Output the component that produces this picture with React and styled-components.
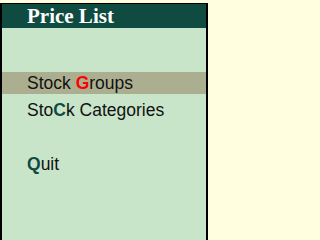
import React from 'react';
import styled, { createGlobalStyle } from 'styled-components';

const GlobalStyle = createGlobalStyle`
  html, body {
    margin: 0;
    padding: 0;
    height: 100%;
    background: #ffffe0;
    overflow: hidden;
  }
  #root {
    height: 100%;
  }
`;

const Panel = styled.div`
  box-sizing: border-box;
  margin-top: 3px;
  width: 208px;
  height: calc(100% - 3px);
  border-top: 1px solid #000;
  border-left: 2px solid #000;
  border-right: 2px solid #000;
  background: #c8e5ca;
  display: flex;
  flex-direction: column;
`;

const Header = styled.div`
  height: 24px;
  background: #0f4b40;
  color: #fff;
  font-family: "Liberation Serif", "Times New Roman", serif;
  font-weight: bold;
  font-size: 21px;
  line-height: 24px;
  padding-left: 25px;
  white-space: nowrap;
`;

const Menu = styled.div`
  display: flex;
  flex-direction: column;
  gap: 5px;
  padding-top: 44px;
`;

const Item = styled.div`
  height: 22px;
  line-height: 22px;
  padding-left: 25px;
  margin-top: ${(p) => (p.$spaced ? '27px' : '0')};
  background: ${(p) => (p.$active ? '#abaf90' : 'transparent')};
  color: #111;
  font-family: "Liberation Sans", Arial, sans-serif;
  font-size: 17.5px;
  white-space: nowrap;
`;

const Key = styled.span`
  font-weight: bold;
  color: ${(p) => (p.$red ? '#ff0000' : '#0f4b40')};
`;

export default function App() {
  return (
    <>
      <GlobalStyle />
      <Panel>
        <Header>Price List</Header>
        <Menu>
          <Item $active>
            Stock <Key $red>G</Key>roups
          </Item>
          <Item>
            Sto<Key>C</Key>k Categories
          </Item>
          <Item $spaced>
            <Key>Q</Key>uit
          </Item>
        </Menu>
      </Panel>
    </>
  );
}
